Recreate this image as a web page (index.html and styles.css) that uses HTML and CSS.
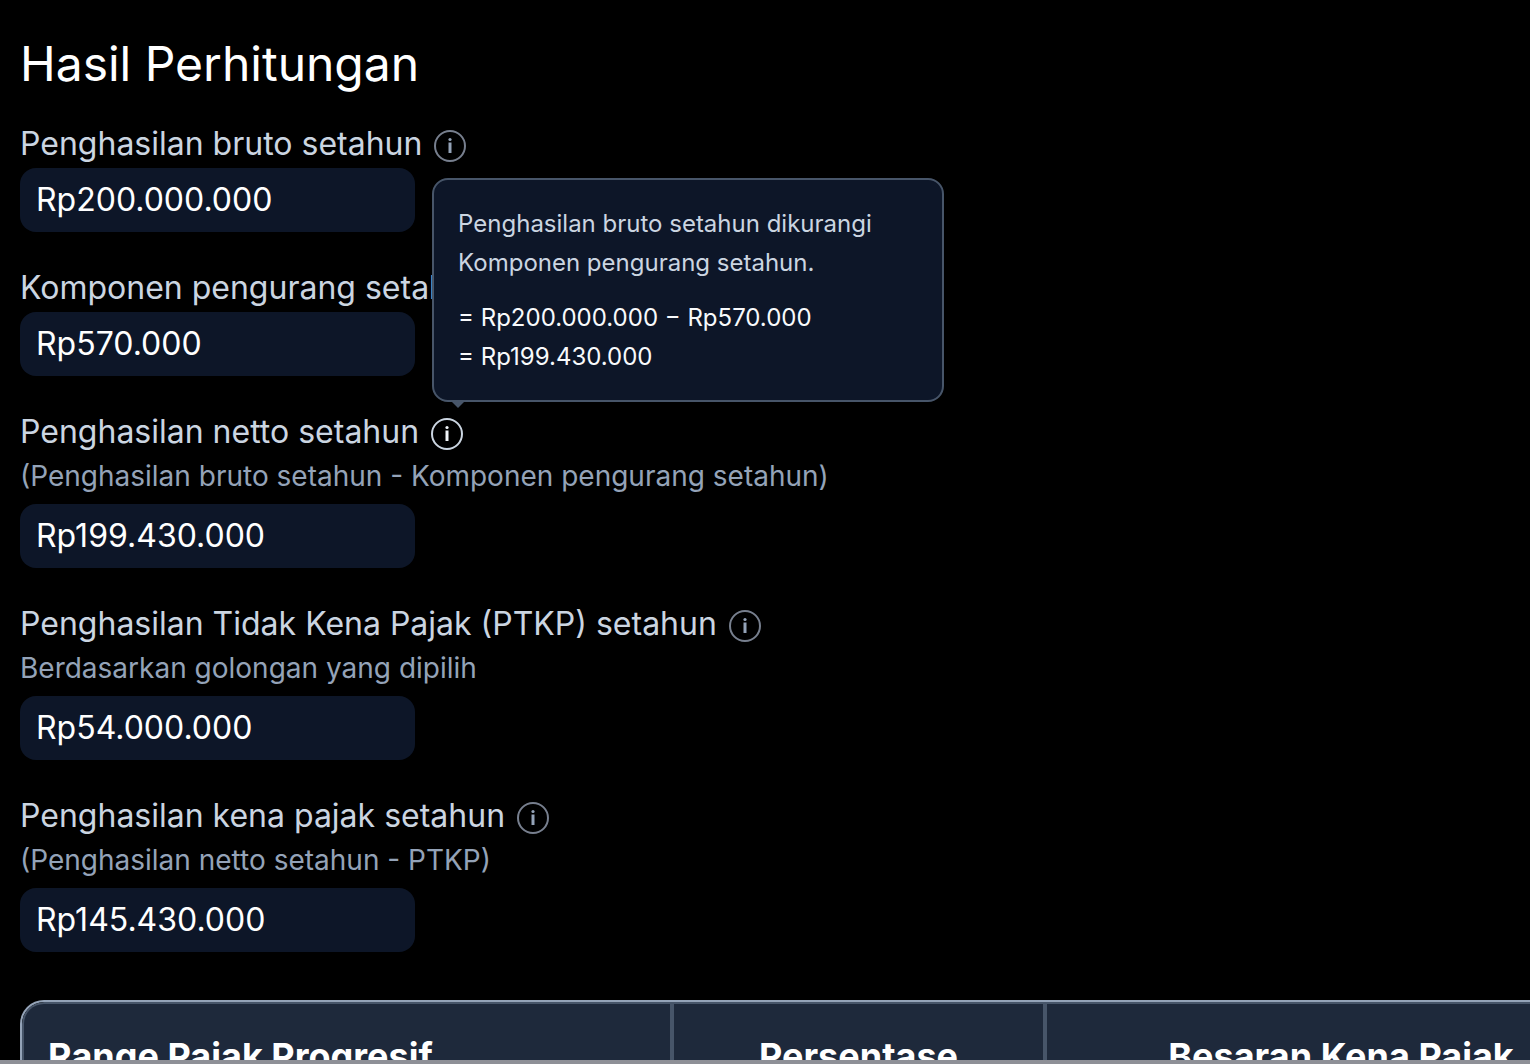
FILE: index.html
```
<!DOCTYPE html>
<html lang="id">
<head>
    <meta charset="UTF-8">
    <meta name="viewport" content="width=device-width, initial-scale=1.0">
    <title>Hasil Perhitungan</title>
    <link rel="stylesheet" href="styles.css">
</head>
<body>
    <main class="result">
        <h1>Hasil Perhitungan</h1>
        <div class="field">
            <div class="field-label">
                <label for="bruto">Penghasilan bruto setahun</label>
                <button type="button" class="info" aria-label="Info penghasilan bruto">
                    <svg viewBox="0 0 32 32"><circle class="ring" cx="16" cy="16" r="15"/><path d="M16 12.5v10.5"/><circle class="dot" cx="16" cy="9.5" r="1.6"/></svg>
                </button>
            </div>
            <input type="text" id="bruto" value="Rp200.000.000" readonly>
        </div>
        <div class="field">
            <div class="field-label">
                <label for="pengurang">Komponen pengurang setahun</label>
            </div>
            <input type="text" id="pengurang" value="Rp570.000" readonly>
        </div>
        <div class="field">
            <div class="field-label">
                <label for="netto">Penghasilan netto setahun</label>
                <div class="info-wrap">
                    <button type="button" class="info active" aria-label="Info penghasilan netto" aria-describedby="netto-tip">
                        <svg viewBox="0 0 32 32"><circle class="ring" cx="16" cy="16" r="15"/><path d="M16 12.5v10.5"/><circle class="dot" cx="16" cy="9.5" r="1.6"/></svg>
                    </button>
                    <div class="tooltip" id="netto-tip" role="tooltip">
                        <p>Penghasilan bruto setahun dikurangi Komponen pengurang setahun.</p>
                        <p class="formula">= Rp200.000.000 − Rp570.000<br>= Rp199.430.000</p>
                    </div>
                </div>
            </div>
            <p class="hint">(Penghasilan bruto setahun - Komponen pengurang setahun)</p>
            <input type="text" id="netto" value="Rp199.430.000" readonly>
        </div>
        <div class="field">
            <div class="field-label">
                <label for="ptkp">Penghasilan Tidak Kena Pajak (PTKP) setahun</label>
                <button type="button" class="info" aria-label="Info PTKP">
                    <svg viewBox="0 0 32 32"><circle class="ring" cx="16" cy="16" r="15"/><path d="M16 12.5v10.5"/><circle class="dot" cx="16" cy="9.5" r="1.6"/></svg>
                </button>
            </div>
            <p class="hint">Berdasarkan golongan yang dipilih</p>
            <input type="text" id="ptkp" value="Rp54.000.000" readonly>
        </div>
        <div class="field">
            <div class="field-label">
                <label for="pkp">Penghasilan kena pajak setahun</label>
                <button type="button" class="info" aria-label="Info penghasilan kena pajak">
                    <svg viewBox="0 0 32 32"><circle class="ring" cx="16" cy="16" r="15"/><path d="M16 12.5v10.5"/><circle class="dot" cx="16" cy="9.5" r="1.6"/></svg>
                </button>
            </div>
            <p class="hint">(Penghasilan netto setahun - PTKP)</p>
            <input type="text" id="pkp" value="Rp145.430.000" readonly>
        </div>
        <div class="table-wrap">
            <table>
                <thead>
                    <tr>
                        <th class="range">Range Pajak Progresif</th>
                        <th class="percent">Persentase</th>
                        <th class="amount">Besaran Kena Pajak</th>
                    </tr>
                </thead>
            </table>
        </div>
    </main>
</body>
</html>
```

FILE: styles.css
```
* {
    box-sizing: border-box;
}
html {
    height: 100%;
    background-color: #000;
}
body {
    height: 100%;
    margin: 0;
    overflow: hidden;
    border-bottom: 4px solid #8e9097;
    color: #fff;
    font-family: Inter, "Liberation Sans", sans-serif;
}
.result {
    padding: 32px 0 0 20px;
}
h1 {
    margin: 0 0 24px;
    font-size: 48px;
    font-weight: 400;
    line-height: 64px;
}
p {
    margin: 0;
}
.field {
    margin-bottom: 32px;
}
.field-label {
    display: flex;
    align-items: center;
    gap: 12px;
    height: 48px;
    color: #cbd5e1;
    font-size: 32px;
    line-height: 48px;
}
.hint {
    height: 48px;
    color: #94a3b8;
    font-size: 28px;
    line-height: 40px;
}
input[type="text"] {
    display: block;
    width: 395px;
    height: 64px;
    padding: 0 16px 2px;
    border: none;
    border-radius: 16px;
    background-color: #0d1628;
    color: #fff;
    font: 32px Inter, "Liberation Sans", sans-serif;
}
.info-wrap {
    position: relative;
    display: flex;
}
.info {
    display: flex;
    margin-top: 4px;
    padding: 0;
    border: none;
    background: none;
    color: #94a3b8;
    cursor: pointer;
}
.info svg {
    width: 32px;
    height: 32px;
    fill: none;
    stroke: currentColor;
    stroke-width: 3;
}
.info .ring {
    stroke: #777f8e;
    stroke-width: 2;
}
.info .dot {
    fill: currentColor;
    stroke: none;
}
.info.active {
    color: #f1f5f9;
}
.info.active .ring {
    stroke: #cbd5e1;
}
.tooltip {
    position: absolute;
    bottom: 48px;
    left: 1px;
    width: 512px;
    padding: 24px;
    border: 2px solid #475569;
    border-radius: 16px;
    background-color: #0d1628;
    color: #cbd5e1;
    font-size: 24px;
    line-height: 39px;
}
.tooltip::after {
    content: "";
    position: absolute;
    top: 100%;
    left: 16px;
    border: 8px solid transparent;
    border-top-color: #475569;
    border-bottom: none;
}
.formula {
    margin-top: 16px;
    color: #f8fafc;
}
.table-wrap {
    margin-top: 48px;
    overflow: hidden;
    border: 2px solid #94a3b8;
    border-right: none;
    border-radius: 24px 0 0 0;
}
table {
    min-width: 100%;
    border: 2px solid #475569;
    border-right: none;
    border-radius: 22px 0 0 0;
    border-spacing: 0;
    background-color: #1e293b;
}
th {
    padding: 24px;
    font-size: 36px;
    font-weight: 700;
    line-height: 56px;
    white-space: nowrap;
}
th + th {
    border-left: 4px solid #475569;
}
.range {
    min-width: 646px;
    text-align: left;
}
.percent {
    min-width: 373px;
}
.amount {
    min-width: 592px;
}
```
